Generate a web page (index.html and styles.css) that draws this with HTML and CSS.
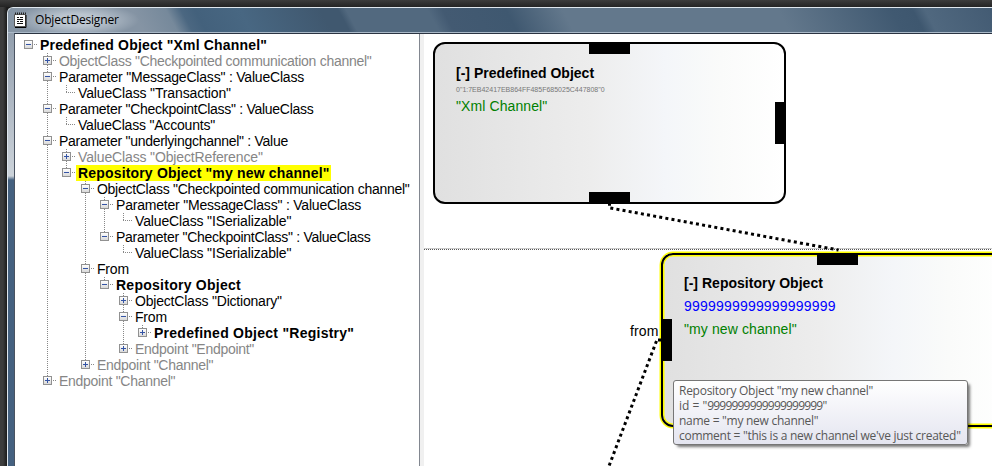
FILE: index.html
```html
<!DOCTYPE html>
<html lang="en">
<head>
<meta charset="utf-8">
<title>ObjectDesigner</title>
<link rel="stylesheet" href="styles.css">
</head>
<body>
<div class="window">
  <header class="titlebar">
    <svg class="app-icon" width="13" height="16" viewBox="0 0 13 16">
      <path d="M0.500 2.500h11v12h-11z" fill="#fff" stroke="#555"/>
      <path d="M1 1.500h11" stroke="#222" stroke-width="2" stroke-dasharray="1 1"/>
      <path d="M12 3v12.500h-11" fill="none" stroke="#000"/>
      <path d="M3 5.500h2M6 5.500h3M3 7.500h6M3 9.500h2M6 9.500h3M3 11.500h6" stroke="#111"/>
    </svg>
    <span class="title">ObjectDesigner</span>
  </header>
  <main class="content">
    <nav class="tree">
      <ul class="root">
        <li><div class="row"><i class="box"></i><b>Predefined Object "Xml Channel"</b></div>
          <ul>
            <li><div class="row muted"><i class="box plus"></i><span>ObjectClass "Checkpointed communication channel"</span></div></li>
            <li><div class="row"><i class="box"></i><span>Parameter "MessageClass" : ValueClass</span></div>
              <ul><li><div class="row wide"><i class="leaf"></i><span>ValueClass "Transaction"</span></div></li></ul></li>
            <li><div class="row tight"><i class="box"></i><span>Parameter "CheckpointClass" : ValueClass</span></div>
              <ul><li><div class="row"><i class="leaf"></i><span>ValueClass "Accounts"</span></div></li></ul></li>
            <li><div class="row tight"><i class="box"></i><span>Parameter "underlyingchannel" : Value</span></div>
              <ul>
                <li><div class="row muted wide"><i class="box plus"></i><span>ValueClass "ObjectReference"</span></div></li>
                <li><div class="row"><i class="box"></i><b class="selected">Repository Object "my new channel"</b></div>
                  <ul>
                    <li><div class="row tight"><i class="box"></i><span>ObjectClass "Checkpointed communication channel"</span></div>
                      <ul>
                        <li><div class="row"><i class="box"></i><span>Parameter "MessageClass" : ValueClass</span></div>
                          <ul><li><div class="row wide"><i class="leaf"></i><span>ValueClass "ISerializable"</span></div></li></ul></li>
                        <li><div class="row tight"><i class="box"></i><span>Parameter "CheckpointClass" : ValueClass</span></div>
                          <ul><li><div class="row wide"><i class="leaf"></i><span>ValueClass "ISerializable"</span></div></li></ul></li>
                      </ul></li>
                    <li><div class="row"><i class="box"></i><span>From</span></div>
                      <ul><li><div class="row"><i class="box"></i><b class="loose">Repository Object</b></div>
                        <ul>
                          <li><div class="row"><i class="box plus"></i><span>ObjectClass "Dictionary"</span></div></li>
                          <li><div class="row"><i class="box"></i><span>From</span></div>
                            <ul><li><div class="row"><i class="box plus"></i><b class="loose">Predefined Object "Registry"</b></div></li></ul></li>
                          <li><div class="row muted"><i class="box plus"></i><span>Endpoint "Endpoint"</span></div></li>
                        </ul></li></ul></li>
                    <li><div class="row muted"><i class="box plus"></i><span>Endpoint "Channel"</span></div></li>
                  </ul></li>
              </ul></li>
            <li><div class="row muted"><i class="box plus"></i><span>Endpoint "Channel"</span></div></li>
          </ul></li>
      </ul>
    </nav>
    <section class="canvas">
      <svg class="links" width="568" height="432" viewBox="424 34 568 432">
        <path d="M424 248.500H992" stroke="#c9c9c9"/>
        <path d="M424 249.500H992" stroke="#555" stroke-dasharray="1 1"/>
      </svg>
      <article class="node node-a">
        <i class="port top"></i><i class="port right"></i><i class="port bottom"></i>
        <h2>[-] Predefined Object</h2>
        <p class="hash">0"1:7EB42417EB864FF485F685025C447808"0</p>
        <p class="name">"Xml Channel"</p>
      </article>
      <article class="node node-b">
        <i class="port top"></i><i class="port left"></i>
        <h2>[-] Repository Object</h2>
        <p class="ident">9999999999999999999</p>
        <p class="name">"my new channel"</p>
      </article>
      <svg class="links" width="568" height="432" viewBox="424 34 568 432">
        <g fill="none" stroke="#000" stroke-width="3">
          <path d="M608 204.300h3"/>
          <path d="M610.300 208L838.500 250" stroke-dasharray="3 3.220"/>
          <path d="M658 340h3"/>
          <path d="M656.500 341L609 466" stroke-dasharray="3 3.200"/>
        </g>
      </svg>
      <span class="port-label">from</span>
      <aside class="tooltip">
        <p>Repository Object "my new channel"</p>
        <p class="id-line">id = "<span class="digits">9999999999999999999</span>"</p>
        <p>name = "my new channel"</p>
        <p>comment = "this is a new channel we've just created"</p>
      </aside>
    </section>
  </main>
</div>
</body>
</html>
```
FILE: styles.css
```css
* { box-sizing: border-box; }
body {
  margin: 0;
  width: 992px;
  height: 466px;
  overflow: hidden;
  padding: 7px 0 0 7px;
  background: linear-gradient(#3c3c3c, #242424 7px, transparent 7px), linear-gradient(90deg, #3c3c3c 0 3px, #1b1b1b 7px);
  font-family: "Liberation Sans", Arial, sans-serif;
  font-size: 14px;
  color: #000;
}
ul, p, h2 { margin: 0; padding: 0; list-style: none; font-size: inherit; }

.window {
  height: 459px;
  display: flex;
  flex-direction: column;
  border: 1px solid #dfe7ee;
  border-width: 1px 0 0 1px;
  border-radius: 6px 0 0 0;
  overflow: hidden;
  background: linear-gradient(#8795a5, #a9b3bf 80px, #ccd3da 168px, #456180 172px, #456180);
}
.titlebar {
  flex: none;
  height: 25px;
  display: flex;
  align-items: center;
  padding: 0 0 0 6px;
  border-bottom: 1px solid #a9b8c7;
  background:
    radial-gradient(ellipse 62px 17px at 69px 12px, #c8d1dace 35%, transparent),
    linear-gradient(62deg, #8594a4 0 120px, #76899b 150px, #4b6781 163px, #43617c 175px, #486782 215px, #40586f 286px, #40586f 302px, #52697f 309px, #52697f 381px, #435a72 394px, #3f5870 450px, #63788c 500px, #63788c 690px, #405971 790px, #3e576f 809px, #50687f 820px, #435b73);
}
.app-icon { flex: none; }
.title {
  margin-left: 8px;
  font: 12px/16px "Open Sans", sans-serif;
  letter-spacing: -0.18px;
}
.content {
  flex: 1;
  display: flex;
  min-height: 0;
  margin-left: 6px;
  border-top: 1px solid #2b3442;
  border-left: 1px solid #4a5361;
}
.tree {
  flex: none;
  width: 405px;
  padding: 3px 0 0 9px;
  background: #fff;
  border-right: 1px solid #828790;
}
.tree ul ul {
  padding-left: 19px;
}
.tree ul ul > li {
  background: repeating-linear-gradient(#888 0 1px, #fff 1px 2px) 4px 0 / 1px 100% no-repeat;
}
.tree ul ul > li:last-child { background-size: 1px 8px; }
.row {
  height: 16px;
  display: flex;
  align-items: center;
  white-space: nowrap;
  letter-spacing: -0.2px;
}
.row span, .row b { line-height: 16px; }
.row b { letter-spacing: 0.17px; }
.row b.loose { letter-spacing: 0.26px; }
.muted { color: #868686; }
.muted, .tight { letter-spacing: -0.28px; }
.wide { letter-spacing: -0.14px; }
.box, .leaf { flex: none; width: 16px; height: 16px; }
.box {
  background:
    linear-gradient(#3454a5, #3454a5) 2px 7px / 5px 1px no-repeat,
    linear-gradient(#fff, #d9d9d9) 1px 4px / 7px 7px no-repeat,
    linear-gradient(#919191, #919191) 0 3px / 9px 9px no-repeat,
    repeating-linear-gradient(90deg, #888 0 1px, #fff 1px 2px) 10px 7px / 3px 1px no-repeat;
}
.box.plus {
  background:
    linear-gradient(#3454a5, #3454a5) 2px 7px / 5px 1px no-repeat,
    linear-gradient(#3454a5, #3454a5) 4px 5px / 1px 5px no-repeat,
    linear-gradient(#fff, #d9d9d9) 1px 4px / 7px 7px no-repeat,
    linear-gradient(#919191, #919191) 0 3px / 9px 9px no-repeat,
    repeating-linear-gradient(90deg, #888 0 1px, #fff 1px 2px) 10px 7px / 3px 1px no-repeat;
}
.leaf { background: repeating-linear-gradient(90deg, #888 0 1px, #fff 1px 2px) 4px 7px / 9px 1px no-repeat; }
.selected { background: #ff0; margin-left: -2px; padding: 0 1px 0 2px; }

.canvas {
  flex: 1;
  position: relative;
  overflow: hidden;
  background: #fff;
  border-left: 4px solid #f0f0f0;
}
.links { position: absolute; left: 0; top: 0; }
.node {
  position: absolute;
  width: 353px;
  border: 2px solid #000;
  border-radius: 12px;
  padding: 21px 0 0 21px;
  background: linear-gradient(90deg, #e0e0e0, #ededed 45%, #f4f6f9 66%, #fafbfa 82%, #fff);
}
.node-a { left: 9px; top: 8px; height: 162px; }
.node-b {
  left: 237px; top: 219px; height: 174px;
  padding-top: 20px;
  box-shadow: 0 0 0 1.5px #ff0, inset 0 0 0 1.5px #ff0;
}
.node h2 { font-size: 14px; line-height: 16px; letter-spacing: 0.02px; }
.hash { font-size: 7px; line-height: 17px; color: #777; }
.name { color: #008000; line-height: 17px; letter-spacing: 0.1px; }
.ident { color: #00f; line-height: 17px; margin: 7px 0 6px; letter-spacing: 0.2px; }
.port { position: absolute; background: #000; }
.port.top, .port.bottom { left: 154px; width: 41px; height: 12px; }
.port.top { top: -2px; }
.port.bottom { bottom: -2px; }
.port.left, .port.right { width: 11px; height: 42px; }
.port.right { right: -2px; top: 58px; }
.port.left { left: -2px; top: 64px; }
.port-label { position: absolute; left: 206px; top: 289px; line-height: 16px; letter-spacing: 0.1px; }
.tooltip {
  position: absolute;
  left: 249px;
  top: 346px;
  width: 295px;
  height: 65px;
  padding: 2px 5px;
  border: 1px solid #767676;
  border-radius: 3px;
  background: linear-gradient(#fff, #e4e5f0);
  box-shadow: 3px 3px 3px -1px #0008;
  color: #575757;
  font: 12px/15px "Open Sans", sans-serif;
  letter-spacing: -0.27px;
  white-space: nowrap;
}
.id-line { letter-spacing: 0; }
.digits { letter-spacing: -0.8px; }
```
